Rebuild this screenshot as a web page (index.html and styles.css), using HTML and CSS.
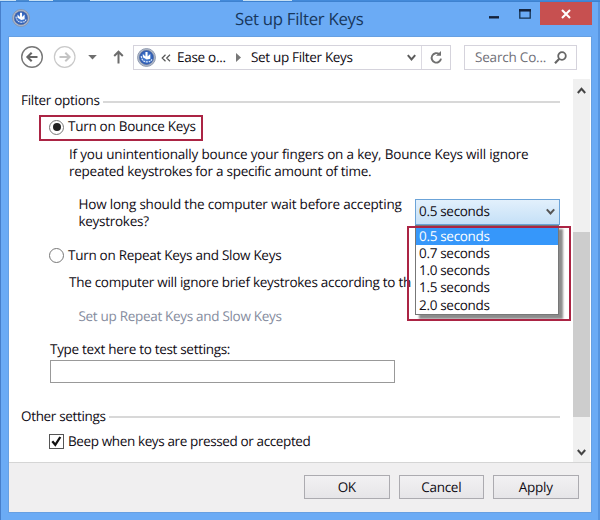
FILE: index.html
```
<!DOCTYPE html>
<html lang="en">
<head>
<meta charset="utf-8">
<title>Set up Filter Keys</title>
<link rel="stylesheet" href="styles.css">
</head>
<body>
<svg class="defs" width="0" height="0">
  <defs>
    <radialGradient id="disc"><stop offset="0" stop-color="#4d8be0"/><stop offset="1" stop-color="#2c58b0"/></radialGradient>
    <symbol id="ease" viewBox="0 0 18 18">
      <circle cx="9" cy="9" r="8.5" fill="#b4bccb" stroke="#8290a9" stroke-width=".8"/>
      <circle cx="9" cy="9" r="6.8" fill="url(#disc)" stroke="#5f7297" stroke-width=".5"/>
      <path d="M4 7.6c.3 3.6 2.2 5.6 5.4 5.6s4.3-1.2 4.8-3" fill="none" stroke="#dce9fb" stroke-width="1.1" stroke-dasharray="1.8 .7"/>
      <path d="M5.5 5.6L8 8V3.8h2V8l2.6-2.4v4.6L9.3 11 5.5 8.8z" fill="#fff"/>
    </symbol>
  </defs>
</svg>
<div class="window">
  <div class="backdrop"><i class="b1"></i><i class="b2"></i><i class="b3"></i><i class="b4"></i><i class="b5"></i></div>
  <header class="titlebar">
    <svg class="app-icon" width="18" height="18"><use href="#ease"/></svg>
    <h1><span class="t-title">Set up Filter Keys</span></h1>
    <div class="controls">
      <svg class="min" width="10" height="3"><path d="M0 1.3h10" stroke="#14213a" stroke-width="2.4"/></svg>
      <svg class="max" width="12" height="10"><path d="M.8 1.4h10.4v7.8H.8z" fill="none" stroke="#14304f" stroke-width="1.3"/><path d="M0 1.3h12" stroke="#14213a" stroke-width="2.5"/></svg>
      <div class="close"><svg width="10" height="10"><path d="M1 1l8 8M9 1L1 9" stroke="#fff" stroke-width="2.1"/></svg></div>
    </div>
  </header>
  <main class="client">
    <nav class="navbar">
      <svg class="arrows" width="111" height="24" viewBox="0 0 111 24" fill="none">
        <circle cx="11" cy="12" r="10.3" stroke="#777" stroke-width="1.4"/>
        <path d="M16.5 12H6.5M10.7 7.7L6.4 12l4.3 4.3" stroke="#666" stroke-width="2.1"/>
        <circle cx="43.7" cy="12" r="10.3" stroke="#c9c9c9" stroke-width="1.2"/>
        <path d="M38.5 12h10M44.3 7.7l4.3 4.3-4.3 4.3" stroke="#c4c4c4" stroke-width="2"/>
        <path d="M67.2 10h8.6l-4.3 4.6z" fill="#6e6e6e"/>
        <path d="M97.5 18.5V7M93.2 11l4.3-4.3 4.3 4.3" stroke="#6c6c6c" stroke-width="2"/>
      </svg>
      <div class="address">
        <div class="crumbs">
          <svg width="19" height="19"><use href="#ease"/></svg>
          <svg class="back2" width="10" height="8" fill="none"><path d="M4.5.8L1.2 4l3.3 3.2M9 .8L5.7 4 9 7.2" stroke="#555" stroke-width="1.2"/></svg>
          <span class="t-ease">Ease o...</span>
          <svg class="sep" width="5" height="9"><path d="M0 0l5 4.5L0 9z" fill="#777"/></svg>
          <span class="t-crumb">Set up Filter Keys</span>
          <svg class="drop" width="9" height="8" fill="none"><path d="M.8 1.2l3.7 4.3 3.7-4.3" stroke="#5c5c5c" stroke-width="2"/></svg>
        </div>
        <div class="refresh"><svg width="13" height="14" fill="none"><path d="M9.3 3.2A4.7 4.7 0 1 0 11 7.6" stroke="#707070" stroke-width="1.9"/><path d="M6 4.7h5V0z" fill="#707070"/></svg></div>
      </div>
      <div class="search"><span class="t-search">Search Co...</span>
        <svg width="13" height="13" fill="none"><circle cx="8" cy="5" r="3.8" stroke="#666" stroke-width="1.8"/><path d="M5.3 7.8L1 12.2" stroke="#666" stroke-width="2.2"/></svg>
      </div>
    </nav>
    <div class="body">
      <section class="content">
        <div class="group"><span class="t-filter">Filter options</span><hr></div>
        <label class="option marked"><i class="radio on"></i><span class="t-bounce">Turn on Bounce Keys</span></label>
        <p class="para"><span class="t-p1">If you unintentionally bounce your fingers on a key, Bounce Keys will ignore</span><br><span class="t-p2">repeated keystrokes for a specific amount of time.</span></p>
        <div class="wait">
          <p><span class="t-w1">How long should the computer wait before accepting</span><br><span class="t-w2">keystrokes?</span></p>
          <div class="select"><span class="t-sec">0.5 seconds</span>
            <svg width="9" height="8" fill="none"><path d="M.8 1.3l3.7 4.2 3.7-4.2" stroke="#555" stroke-width="2"/></svg>
            <ul class="list t-sec"><li class="sel">0.5 seconds</li><li>0.7 seconds</li><li>1.0 seconds</li><li>1.5 seconds</li><li>2.0 seconds</li></ul>
            <div class="highlight"></div>
          </div>
        </div>
        <label class="option second"><i class="radio"></i><span class="t-repeat">Turn on Repeat Keys and Slow Keys</span></label>
        <p class="ignore"><span class="t-ignore">The computer will ignore brief keystrokes according to th</span></p>
        <p class="link"><span class="t-link">Set up Repeat Keys and Slow Keys</span></p>
        <p class="test"><span class="t-test">Type text here to test settings:</span></p>
        <div class="input"></div>
        <div class="group other"><span class="t-other">Other settings</span><hr></div>
        <label class="option beep"><i class="check"><svg width="11" height="11" fill="none"><path d="M1.3 5.2l3 3.6 5-7.8" stroke="#111" stroke-width="2.3"/></svg></i><span class="t-beep">Beep when keys are pressed or accepted</span></label>
      </section>
      <div class="scrollbar">
        <svg width="9" height="7" fill="none"><path d="M.8 6l3.7-4.2L8.2 6" stroke="#444" stroke-width="2"/></svg>
        <div class="thumb"></div>
        <svg width="9" height="7" fill="none"><path d="M.8 1l3.7 4.2L8.2 1" stroke="#444" stroke-width="2"/></svg>
      </div>
    </div>
    <footer class="footer"><div class="button">OK</div><div class="button">Cancel</div><div class="button">Apply</div></footer>
  </main>
</div>
</body>
</html>
```

FILE: styles.css
```
* { box-sizing: border-box; margin: 0; padding: 0; }
body { width: 600px; height: 520px; overflow: hidden; font: 13.5px/17.3px "Open Sans", "Noto Sans", sans-serif; letter-spacing: -0.28px; color: #100c14; text-rendering: geometricPrecision; }
.defs { display: block; height: 0; }
svg { display: block; flex: none; }
span { white-space: nowrap; }
.window { width: 600px; height: 520px; background: #6babf5; border-left: 1px solid #477fcb; border-right: 2px solid #5795e0; padding: 0 7px 0 8px; }
.backdrop { display: flex; height: 2px; margin: 0 -9px 0 -9px; background: #c7e0f3; border-bottom: 1px solid #3e82d0; }
.b1 { width: 16px; }
.b2 { width: 13px; background: #4b8bd0; }
.b3 { width: 37px; margin-left: 24px; background: #4388d0; }
.b4 { width: 23px; margin-left: 130px; background: #438ada; }
.b5 { width: 308px; margin-left: 49px; background: #438ada; }
.titlebar { display: flex; height: 35px; align-items: flex-start; margin-right: -1px; }
.app-icon { margin: 7px 0 0 3px; }
h1 { font-weight: 400; font-size: 16.8px; letter-spacing: -0.3px; line-height: 24px; color: #17375c; margin: 5px 0 0 205px; width: 200px; }
.controls { display: flex; margin-left: auto; }
.min { margin: 14px 20px 0 0; }
.max { margin: 7px 9px 0 0; }
.close { width: 52px; height: 23px; background: #c75050; display: flex; align-items: center; justify-content: center; }
.client { height: 475px; background: #fff; width: 582px; outline: 1px solid #67a0e2; }
.navbar { height: 42px; padding: 8px 0 0 12px; display: flex; }
.address { display: flex; width: 318px; height: 25px; border: 1px solid #d5d3dc; margin-left: 1px; }
.crumbs { display: flex; align-items: center; width: 288px; border-right: 1px solid #dcdae2; padding-left: 3px; }
.back2 { margin: 0 6px 0 5px; }
.t-ease { width: 50px; }
.sep { margin: 0 10px 0 9px; }
.drop { margin: 0 5px 0 auto; }
.refresh { flex: 1; display: flex; align-items: center; justify-content: center; }
.search { display: flex; align-items: center; justify-content: space-between; width: 113px; height: 25px; border: 1px solid #d5d3dc; margin-left: 13px; padding: 0 9px 0 10px; color: #706f78; }
.t-crumb, .t-other { letter-spacing: -0.33px; }
.t-search, .t-w1 { letter-spacing: -0.2px; }
.t-p1 { letter-spacing: -0.18px; }
.t-p2 { letter-spacing: -0.26px; }
.t-link, .t-test, .t-sec { letter-spacing: -0.31px; }
.t-beep { letter-spacing: -0.38px; }
.body { display: flex; height: 383px; }
.content { width: 563px; padding: 13px 0 0 12px; }
.group { display: flex; align-items: center; height: 18px; width: 539px; }
.group hr { flex: 1; border: 0; height: 2px; background: #d8d8d8; margin: 2px 0 0 3px; }
.option { display: flex; align-items: center; }
.marked { width: 164px; height: 26px; border: 2px solid #ab2444; margin: 5px 0 0 18px; padding: 0 0 2px 8px; }
.radio { width: 15px; height: 15px; border: 1.3px solid #777; border-radius: 50%; margin-right: 4px; display: flex; align-items: center; justify-content: center; flex: none; }
.radio.on::after { content: ""; width: 8px; height: 8px; border-radius: 50%; background: #222; }
.para { margin: 5px 0 0 48px; }
.wait { display: flex; margin: 12px 0 0 57.5px; height: 46px; padding-top: 3px; }
.wait p { width: 336.5px; }
.select { position: relative; width: 145px; height: 26px; border: 1px solid #6ba3d8; background: linear-gradient(#e2f0fc, #c5e0f7); display: flex; align-items: center; justify-content: space-between; padding: 0 4px 0 3px; margin-top: 3px; }
.list { position: absolute; left: -1px; top: 25px; width: 144px; height: 90px; border: 1px solid #777; background: #fff; list-style: none; box-shadow: 4px 4px 2px rgba(0,0,0,.45); padding-top: 2px; }
.list li { height: 17.3px; padding-left: 3px; white-space: nowrap; }
.list .sel { background: #3697fa; color: #fff; }
.highlight { position: absolute; left: -9px; top: 26px; width: 164px; height: 95px; border: 2px solid #ab2444; }
.second { margin: 8px 0 0 28px; height: 18px; }
.ignore { margin: 9px 0 0 48px; }
.link { margin: 17px 0 0 57.5px; color: #858c9e; }
.test { margin: 16px 0 0 29px; }
.input { width: 345px; height: 23px; border: 1px solid #999; margin: 2px 0 0 29px; }
.other { margin-top: 24px; }
.beep { margin: 7px 0 0 28px; height: 18px; }
.check { width: 15px; height: 15px; border: 1.3px solid #555; margin-right: 4px; display: flex; align-items: center; justify-content: center; }
.scrollbar { width: 17px; background: #f0f0f0; display: flex; flex-direction: column; align-items: center; padding: 8px 0 6px; margin-left: 1px; }
.scrollbar .thumb { width: 17px; height: 185px; background: #cdcdcd; margin: 138px 0 32px; }
.footer { height: 50px; background: #f0eff0; border-top: 1px solid #d5d5d5; display: flex; gap: 9px; padding: 12px 0 0 295px; }
.button { width: 85.5px; height: 24px; border: 1px solid #acabb0; background: linear-gradient(#f2f1f3, #e6e5e8); text-align: center; line-height: 22px; }
```
